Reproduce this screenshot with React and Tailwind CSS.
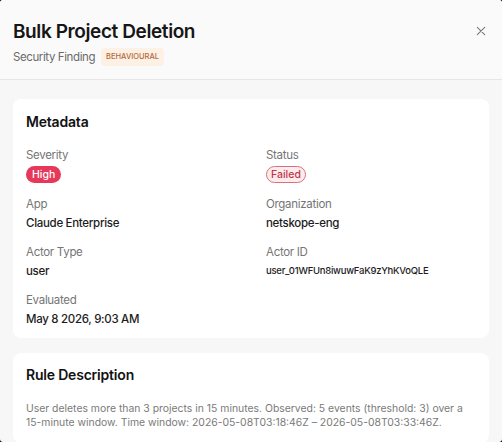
import React from "react";

const F = { fontFamily: "Inter, 'Noto Sans', sans-serif" };

function Field({ label, children }) {
  return (
    <div className="flex flex-col">
      <div className="text-[11.5px] leading-[16px] tracking-[-0.3px] text-[#757575]">{label}</div>
      <div className="mt-[3px] flex text-[11.5px] leading-[16px]">{children}</div>
    </div>
  );
}

function Value({ children }) {
  return (
    <span className="text-[11.5px] leading-[16px] tracking-[-0.3px] font-medium text-[#1c1c1c]">{children}</span>
  );
}

export default function App() {
  return (
    <div className="w-[502px] h-[442px] bg-black overflow-hidden" style={F}>
      <div className="h-full bg-[#f7f7f7] rounded-[3px] overflow-hidden flex flex-col">
        <header className="relative h-[80px] shrink-0 bg-[#fafafa] border-b border-[#e6e6e6] px-[13px] pt-[20px]">
          <h1 className="text-[19px] leading-[24px] font-semibold text-[#161616] tracking-[-0.4px]">
            Bulk Project Deletion
          </h1>
          <div className="flex items-center gap-[6px] mt-[4px]">
            <span className="text-[11.5px] leading-[18px] tracking-[-0.4px] text-[#6b6b6b]">Security Finding</span>
            <span className="h-[18px] px-[5px] rounded-[4px] bg-[#fdf0e4] text-[#b5693b] text-[7.5px] leading-[18px] font-medium flex items-center">
              BEHAVIOURAL
            </span>
          </div>
          <button className="absolute right-[15px] top-[25px] w-[12px] h-[12px] text-[#7a7a7a]">
            <svg viewBox="0 0 12 12" width="12" height="12" fill="none" stroke="currentColor" strokeWidth="1.1" strokeLinecap="round">
              <path d="M2.3 2.3l7.4 7.4M9.7 2.3l-7.4 7.4" />
            </svg>
          </button>
        </header>
        <main className="px-[13px] pt-[19px] flex flex-col gap-[15px]">
          <section className="bg-white rounded-[8px] px-[13px] pt-[13px] pb-[11px]">
            <h2 className="text-[14px] leading-[20px] font-semibold tracking-[-0.2px] text-[#111]">Metadata</h2>
            <div className="grid grid-cols-2 gap-x-[30px] gap-y-[13px] mt-[15px]">
              <Field label="Severity">
                <span className="inline-flex items-center h-[17px] px-[6px] rounded-full bg-[#e6385a] text-white text-[10.5px] font-medium">High</span>
              </Field>
              <Field label="Status">
                <span className="inline-flex items-center h-[17px] px-[4px] rounded-full bg-[#fdecee] border border-[#dc6f7b] text-[#c23447] text-[10.5px] font-medium">Failed</span>
              </Field>
              <Field label="App">
                <Value>Claude Enterprise</Value>
              </Field>
              <Field label="Organization">
                <Value>netskope-eng</Value>
              </Field>
              <Field label="Actor Type">
                <Value>user</Value>
              </Field>
              <Field label="Actor ID">
                <span className="text-[9.5px] leading-[16px] tracking-[-0.25px] font-medium text-[#1c1c1c]">user_01WFUn8iwuwFaK9zYhKVoQLE</span>
              </Field>
              <Field label="Evaluated">
                <Value>May 8 2026, 9:03 AM</Value>
              </Field>
            </div>
          </section>
          <section className="bg-white rounded-[8px] px-[13px] pt-[12px] pb-[14px]">
            <h2 className="text-[14px] leading-[20px] font-semibold tracking-[-0.2px] text-[#111]">Rule Description</h2>
            <p className="mt-[17px] text-[10.4px] leading-[13.5px] text-[#7a7a7a]">
              User deletes more than 3 projects in 15 minutes. Observed: 5 events (threshold: 3) over a{" "}
              <span className="whitespace-nowrap">15-minute</span> window. Time window: 2026-05-08T03:18:46Z – 2026-05-08T03:33:46Z.
            </p>
          </section>
        </main>
      </div>
    </div>
  );
}
